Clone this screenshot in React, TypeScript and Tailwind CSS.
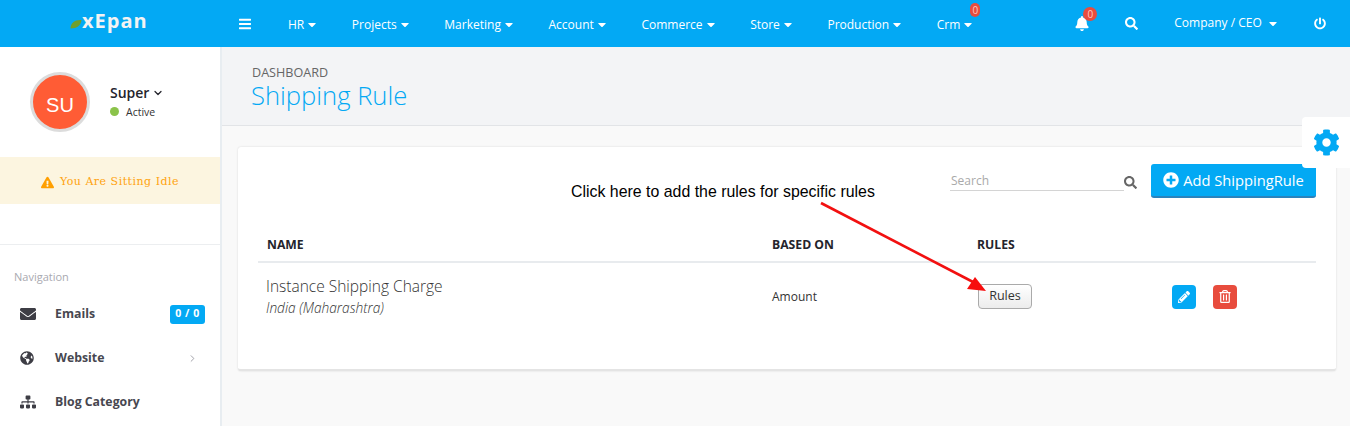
import React from "react";
import {
  FaBars,
  FaBell,
  FaCaretDown,
  FaCog,
  FaEnvelope,
  FaExclamationTriangle,
  FaGlobeAmericas,
  FaPencilAlt,
  FaPlusCircle,
  FaPowerOff,
  FaRegTrashAlt,
  FaSearch,
  FaSitemap,
} from "react-icons/fa";
import { FiChevronDown, FiChevronRight } from "react-icons/fi";

const menus = ["HR", "Projects", "Marketing", "Account", "Commerce", "Store", "Production"];

const Badge: React.FC<{ className: string }> = ({ className }) => (
  <span className={`absolute flex items-center justify-center bg-[#e84c3d] text-[10px] leading-none text-[#ffc9c2] ${className}`}>0</span>
);

const Caret: React.FC = () => <FaCaretDown className="h-[15px] w-[8px] shrink-0" />;

const TopBar: React.FC = () => (
  <header className="flex h-[47px] items-center whitespace-nowrap bg-[#03a9f4] text-[12px] text-white">
    {/* logo */}
    <div className="flex w-[239px] shrink-0 items-center pl-[70px] pb-[5px]">
      <svg width="12" height="10" viewBox="0 0 12 10" className="mt-[5px] shrink-0">
        <path d="M0.5 9.5 C0.5 4 5 0.5 11.5 1 C11 6 7 9.5 0.5 9.5 Z" fill="#6f9f2e" />
      </svg>
      <span className="text-[20px] font-bold tracking-[1px] text-[#f3f3f3]">xEpan</span>
    </div>
    <FaBars className="h-[14px] w-[12px] shrink-0" />
    <nav className="ml-[37px] flex items-center gap-[35.6px] pt-[2px]">
      {menus.map((m) => (
        <span key={m} className="flex items-center gap-[4px]">
          {m}
          <Caret />
        </span>
      ))}
      <span className="relative flex items-center gap-[4px]">
        Crm
        <Caret />
        <Badge className="-top-[13px] right-[-8px] h-[14px] w-[10px] rounded-full" />
      </span>
    </nav>
    <span className="relative ml-[103px] flex">
      <FaBell className="h-[15px] w-[14px]" />
      <Badge className="-top-[9px] -right-[8px] h-[14px] w-[14px] rounded-full" />
    </span>
    <FaSearch className="ml-[36px] h-[13px] w-[13px]" />
    <span className="ml-[36px] flex items-center gap-[7px] pb-[1px]">
      Company / CEO
      <Caret />
    </span>
    <FaPowerOff className="ml-[37px] h-[13px] w-[12px]" />
  </header>
);

const NavRow: React.FC<{ icon: React.ReactNode; label: string; right?: React.ReactNode }> = ({ icon, label, right }) => (
  <div className="flex h-[44px] items-center pl-[20px] pr-[15px]">
    <span className="flex w-[35px] text-[#3d3d45]">{icon}</span>
    <span className="text-[12.3px] font-bold text-[#474750]">{label}</span>
    <span className="ml-auto flex items-center">{right}</span>
  </div>
);

const Sidebar: React.FC = () => (
  <aside className="h-[379px] w-[222px] shrink-0 border-r-[2px] border-[#e8edf1] bg-white">
    <div className="flex h-[110px] items-center pl-[30px] pb-[1px]">
      <div className="flex h-[60px] w-[60px] items-center justify-center rounded-full border-[3px] border-[#dcdcdc] bg-[#ff5c35] pt-[6px] font-['Liberation_Sans',sans-serif] text-[20px] text-white">
        SU
      </div>
      <div className="ml-[20px]">
        <div className="flex items-center gap-[3px] text-[14px] font-semibold leading-[20px] text-[#24242c]">
          Super
          <FiChevronDown className="h-[12px] w-[12px]" strokeWidth={2.5} />
        </div>
        <div className="flex items-center gap-[7px] text-[10.5px] leading-[18px] text-[#333]">
          <span className="h-[9px] w-[9px] rounded-full bg-[#8bc34a]" />
          Active
        </div>
      </div>
    </div>
    <div className="flex h-[47px] items-center justify-center gap-[6px] bg-[#fcf5e0] pt-[3px] font-['DejaVu_Serif',serif] text-[11px] tracking-[0.5px] text-[#ffa30f]">
      <FaExclamationTriangle className="h-[13px] w-[13px] text-[#ff9f00]" />
      You Are Sitting Idle
    </div>
    <div className="mt-[40px] border-t border-[#eceef0] pt-[24px]">
      <div className="pl-[14px] text-[11px] leading-[16px] text-[#a9a9b0]">Navigation</div>
      <div className="mt-[7px]">
        <NavRow
          icon={<FaEnvelope className="h-[16px] w-[16px]" />}
          label="Emails"
          right={<span className="flex h-[19px] w-[35px] items-center justify-center rounded-[3px] bg-[#03a9f4] text-[10.5px] font-bold tracking-[0.5px] text-white">0 / 0</span>}
        />
        <NavRow
          icon={<FaGlobeAmericas className="h-[14px] w-[14px]" />}
          label="Website"
          right={<FiChevronRight className="mr-[7px] h-[11px] w-[11px] text-[#9a9aa2]" />}
        />
        <NavRow icon={<FaSitemap className="h-[16px] w-[16px]" />} label="Blog Category" />
      </div>
    </div>
  </aside>
);

const Toolbar: React.FC = () => (
  <div className="flex h-[51px] items-start justify-end">
    <div className="mt-[20px] flex items-center">
      <div className="h-[24px] w-[174px] border-b border-[#d4d4d4] pl-px text-[12px] leading-[28px] text-[#a9a9a9]">Search</div>
      <FaSearch className="mt-[6px] h-[13px] w-[13px] text-[#666]" />
    </div>
    <button className="ml-[14px] mt-[17px] flex h-[34px] w-[165px] items-center justify-center gap-[4px] rounded-[3px] border-b-[2px] border-[#2a83bd] bg-[#03a9f4] text-[14.7px] text-white">
      <FaPlusCircle className="h-[16px] w-[16px]" />
      Add ShippingRule
    </button>
  </div>
);

const ShippingTable: React.FC = () => (
  <div className="mt-[26px]">
    <div className="grid h-[39px] grid-cols-[506px_205px_1fr] items-center border-b-[2px] border-[#e8ebee] pl-[8px] pt-[5px] text-[12.2px] font-bold text-[#24242c]">
      <span className="ml-px">NAME</span>
      <span>BASED ON</span>
      <span>RULES</span>
    </div>
    <div className="grid h-[67px] grid-cols-[506px_205px_195px_1fr] items-center pl-[8px]">
      <div className="pb-[1px]">
        <div className="text-[15.5px] leading-[22px] font-light text-[#333]">Instance Shipping Charge</div>
        <div className="text-[13.7px] leading-[21px] font-light italic text-[#333]">India (Maharashtra)</div>
      </div>
      <span className="text-[12px] text-[#333]">Amount</span>
      <button className="ml-[1px] h-[25px] w-[54px] rounded-[4px] border border-[#aaa] bg-gradient-to-b from-white to-[#ececec] text-[12.6px] text-[#333]">Rules</button>
      <div className="flex gap-[17px]">
        <span className="flex h-[24px] w-[24px] items-center justify-center rounded-[4px] bg-[#03a9f4] text-white">
          <FaPencilAlt className="h-[12px] w-[12px]" />
        </span>
        <span className="flex h-[24px] w-[24px] items-center justify-center rounded-[4px] bg-[#e84c3d] text-white">
          <FaRegTrashAlt className="h-[13px] w-[12px]" />
        </span>
      </div>
    </div>
  </div>
);

export default function App() {
  return (
    <div className="relative h-[426px] w-[1350px] overflow-hidden bg-[#f9f9f9] font-['Open_Sans',sans-serif]">
      <TopBar />
      <div className="flex">
        <Sidebar />
        <main className="min-w-0 flex-1">
          <div className="h-[79px] border-b border-[#e2e4e7] bg-[#f3f4f6] pl-[30px] pt-[18px]">
            <div className="text-[12.6px] leading-[16px] text-[#666]">DASHBOARD</div>
            <h1 className="-ml-px mt-px text-[25.6px] leading-[28px] font-light text-[#03a9f4]">Shipping Rule</h1>
          </div>
          <section className="ml-[16px] mt-[21px] h-[224px] w-[1098px] rounded-[3px] border-b-[2px] border-[#e4e4e4] bg-white px-[20px] shadow-[0_0_2px_rgba(0,0,0,0.15)]">
            <Toolbar />
            <ShippingTable />
          </section>
        </main>
      </div>

      {/* settings tab */}
      <div className="absolute right-0 top-[117px] flex h-[51px] w-[48px] items-center justify-center rounded-l-[4px] bg-white pb-[1px]">
        <FaCog className="h-[27px] w-[27px] text-[#03a9f4]" />
      </div>

      {/* annotation drawn over the page */}
      <div className="absolute left-[571px] top-[183px] font-['Liberation_Sans',sans-serif] text-[15.9px] leading-[18px] text-black">
        Click here to add the rules for specific rules
      </div>
      <svg className="absolute left-0 top-0" width="1350" height="426" viewBox="0 0 1350 426">
        <line x1="821" y1="203" x2="975" y2="283" stroke="#f21010" strokeWidth="2.6" />
        <polygon points="986,291 967,289 975,277" fill="#f70d0d" />
      </svg>
    </div>
  );
}
